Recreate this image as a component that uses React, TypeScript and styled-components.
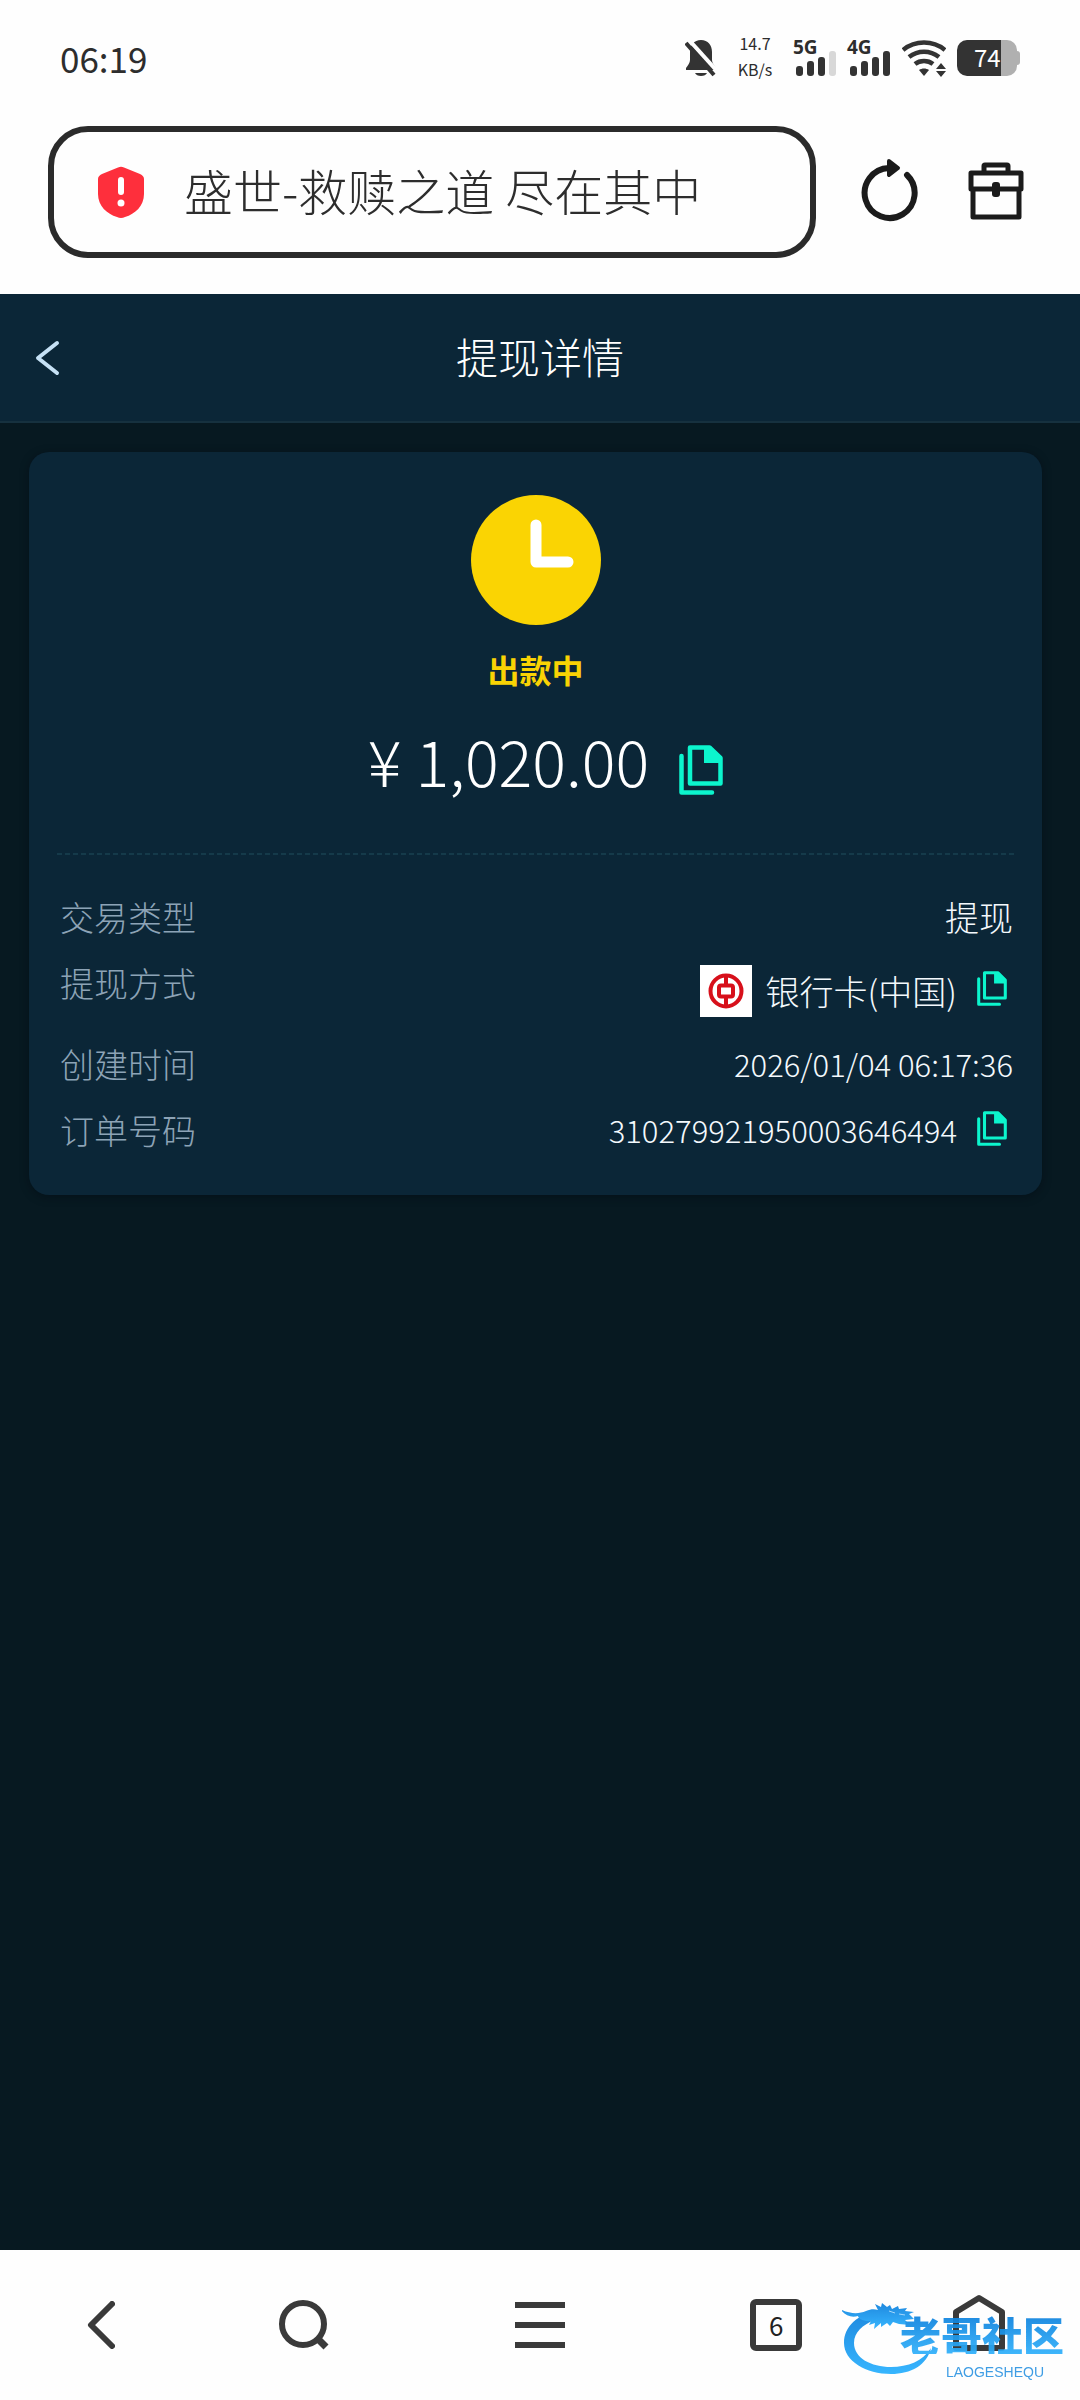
import React from "react";
import styled, { createGlobalStyle } from "styled-components";

const GlobalStyle = createGlobalStyle`
  * { box-sizing: border-box; }
  html, body { margin: 0; padding: 0; }
  body {
    background: #071921;
    font-family: "Noto Sans CJK SC", "Noto Sans", sans-serif;
    font-weight: 300;
  }
  button {
    display: flex;
    align-items: center;
    justify-content: center;
    margin: 0;
    padding: 0;
    border: 0;
    background: none;
    font: inherit;
    color: inherit;
    cursor: pointer;
  }
  svg { display: block; flex: none; }
`;

const Page = styled.div`
  min-height: 100vh;
  display: flex;
  flex-direction: column;
`;

const BrowserTop = styled.header`
  background: #fefefe;
  color: #2d2d2d;
  padding-bottom: 36px;
`;

const StatusBar = styled.div`
  display: flex;
  align-items: center;
  justify-content: space-between;
  height: 116px;
  padding: 0 60px;
`;

const Clock = styled.time`
  font-size: 35px;
  line-height: 40px;
  font-weight: 400;
`;

const StatusIcons = styled.div`
  display: flex;
  align-items: center;
`;

const NetSpeed = styled.div`
  display: flex;
  flex-direction: column;
  align-items: center;
  gap: 6px;
  width: 34px;
  margin: 0 22px 4px 21px;
  font-size: 16px;
  line-height: 20px;
  font-weight: 400;
  white-space: nowrap;
`;

const Signal = styled.div`
  display: flex;
  flex-direction: column;
  width: 42px;
  height: 36px;
  margin-right: 12px;
  position: relative;
`;

const SignalLabel = styled.span`
  position: absolute;
  left: -1px;
  top: -3px;
  font: 700 19px/20px "Open Sans", sans-serif;
`;

const Battery = styled.div`
  display: flex;
  align-items: center;
  margin-left: 11px;
`;

const BatteryBody = styled.div`
  width: 60px;
  height: 36px;
  border-radius: 10px;
  background: linear-gradient(to right, #333 44px, #b0b0b0 44px);
  color: #fff;
  font-size: 24px;
  line-height: 34px;
  font-weight: 400;
  padding-left: 17px;
`;

const BatteryTip = styled.div`
  width: 3px;
  height: 14px;
  border-radius: 0 4px 4px 0;
  background: #b0b0b0;
`;

const AddressRow = styled.div`
  display: flex;
  align-items: center;
  margin-top: 10px;
  padding: 0 56px 0 48px;
`;

const AddressBox = styled.label`
  flex: 1;
  min-width: 0;
  display: flex;
  align-items: center;
  gap: 40px;
  height: 132px;
  padding: 0 44px;
  border: 6px solid #2b2b2b;
  border-radius: 40px;
`;

const AddressInput = styled.input`
  flex: 1;
  min-width: 0;
  padding: 0 0 4px;
  border: 0;
  outline: 0;
  background: none;
  font: inherit;
  font-size: 49px;
  line-height: 60px;
  color: #2d2d2d;
`;

const ToolButton = styled.button`
  margin-left: 44px;
  & + & { margin-left: 50px; }
`;

const AppBar = styled.div`
  display: grid;
  grid-template-columns: 1fr auto 1fr;
  align-items: center;
  height: 129px;
  padding: 0 34px;
  background: #0b2637;
  border-bottom: 2px solid #16313f;
`;

const BackButton = styled.button`
  justify-self: start;
  color: #c6e1f5;
`;

const Title = styled.h1`
  margin: 0;
  padding-bottom: 4px;
  font-size: 42px;
  line-height: 60px;
  font-weight: 300;
  color: #fff;
`;

const Main = styled.main`
  flex: 1;
  padding: 29px 38px 29px 29px;
`;

const Card = styled.section`
  padding: 43px 28px 40px;
  border-radius: 20px;
  background: #0b2637;
  box-shadow: 0 2px 10px rgba(0, 8, 14, 0.4);
`;

const Summary = styled.div`
  display: flex;
  flex-direction: column;
  align-items: center;
`;

const StatusText = styled.p`
  margin: 19px 0 26px;
  font-size: 32px;
  line-height: 50px;
  font-weight: 700;
  color: #f9d304;
`;

const AmountRow = styled.div`
  display: flex;
  align-items: center;
  gap: 30px;
  padding-left: 20px;
`;

const Amount = styled.span`
  font-size: 63px;
  line-height: 80px;
  color: #fff;
`;

const CopyButton = styled.button<{ $small?: boolean }>`
  color: #0cf5cd;
  ${({ $small }) => ($small ? "margin: 0 6px 4px 20px;" : "margin-top: 20px;")}
`;

const Divider = styled.hr`
  height: 2px;
  margin: 53px 0 37px;
  border: 0;
  background: repeating-linear-gradient(to right, #153a4a 0 5px, transparent 5px 8px);
`;

const Details = styled.dl`
  display: flex;
  flex-direction: column;
  gap: 16px;
  margin: 0;
  padding: 0 1px 0 3px;
`;

const DetailRow = styled.div`
  display: flex;
  align-items: flex-start;
  justify-content: space-between;
`;

const Label = styled.dt`
  font-size: 34px;
  line-height: 50px;
  color: #8da3b6;
`;

const Value = styled.dd<{ $tall?: boolean; $numeric?: boolean }>`
  display: flex;
  align-items: center;
  height: ${({ $tall }) => ($tall ? 65 : 50)}px;
  margin: 0;
  font-size: ${({ $numeric }) => ($numeric ? 31 : 34)}px;
  line-height: 50px;
  color: #f4f9fd;
`;

const BankLogo = styled.span`
  display: flex;
  align-items: center;
  justify-content: center;
  width: 52px;
  height: 52px;
  margin-right: 14px;
  background: #fff;
`;

const BottomNav = styled.nav`
  position: relative;
  display: grid;
  grid-template-columns: 3fr 3fr 4fr 3fr 3fr;
  height: 150px;
  background: #fefefe;
  color: #3a3a3a;
`;

const TabCount = styled.span`
  display: flex;
  align-items: center;
  justify-content: center;
  width: 52px;
  height: 52px;
  border: 6px solid #3a3a3a;
  border-radius: 6px;
  font-size: 26px;
  line-height: 40px;
  font-weight: 400;
  color: #222;
`;

const Watermark = styled.div`
  position: absolute;
  right: 16px;
  top: 46px;
  width: 222px;
  height: 84px;
  opacity: 0.92;
  pointer-events: none;
`;

const WatermarkName = styled.span`
  position: absolute;
  right: 0;
  top: 18px;
  font-size: 41px;
  line-height: 40px;
  font-weight: 900;
  white-space: nowrap;
  color: transparent;
  background: linear-gradient(#0b7fdc, #2fb0fb);
  background-clip: text;
  -webkit-background-clip: text;
`;

const WatermarkLatin = styled.span`
  position: absolute;
  right: 20px;
  top: 69px;
  font: 400 14px/14px "Liberation Sans", sans-serif;
  color: #2f95e2;
`;

function BellOff() {
  return (
    <svg width="32" height="38" viewBox="0 0 32 38" aria-hidden="true">
      <path d="M16 1C9 1 5 6 5 13v8c0 3-2 5-4 8v2h30v-2c-2-3-4-5-4-8v-8C27 6 23 1 16 1z" fill="#333" />
      <path d="M10 34h12c-1 2-3 3-6 3s-5-1-6-3z" fill="#333" />
      <path d="M4 1l28 31" stroke="#fefefe" strokeWidth="4" />
      <path d="M1 4l28 32" stroke="#333" strokeWidth="4" />
    </svg>
  );
}

function SignalBars({ label, level }: { label: string; level: number }) {
  const bars = [10, 15, 19, 25];
  return (
    <Signal>
      <SignalLabel>{label}</SignalLabel>
      <svg width="42" height="36" viewBox="0 0 42 36" aria-hidden="true">
        {bars.map((h, i) => (
          <rect key={h} x={2 + i * 11} y={36 - h} width="7" height={h} rx="3" fill={i < level ? "#333" : "#d8d8d8"} />
        ))}
      </svg>
    </Signal>
  );
}

function Wifi() {
  return (
    <svg width="44" height="37" viewBox="0 0 44 37" aria-hidden="true">
      <g fill="none" stroke="#333" strokeWidth="4.5">
        <path d="M1 10C13 0 31 0 43 10" />
        <path d="M7 17c9-7 21-7 30 0" />
        <path d="M13 24c5-4 13-4 18 0" />
      </g>
      <path d="M17 30c3-2 7-2 10 0l-5 6z" fill="#333" />
      <path d="M34 29l5-6 5 6zM34 31h10l-5 6z" fill="#333" />
    </svg>
  );
}

function Shield() {
  return (
    <svg width="46" height="52" viewBox="0 0 46 52" aria-hidden="true">
      <path d="M20 1.500Q23 0 26 1.500L42 8q4 2 4 5v15c0 12-9 20-19 23q-4 2-8 0C9 48 0 40 0 28V13q0-3 4-5z" fill="#fe2f3c" />
      <path d="M23 14v12" stroke="#fff" strokeWidth="6" strokeLinecap="round" />
      <circle cx="23" cy="37" r="3.500" fill="#fff" />
    </svg>
  );
}

function Reload() {
  return (
    <svg width="58" height="68" viewBox="0 0 58 68" aria-hidden="true">
      <path d="M47 17A25 25 0 1 1 29 10" fill="none" stroke="#1b1b1b" strokeWidth="6" strokeLinecap="round" />
      <path d="M29 3l9 7-9 7z" fill="#1b1b1b" stroke="#1b1b1b" strokeWidth="4" strokeLinejoin="round" />
    </svg>
  );
}

function Briefcase() {
  return (
    <svg width="56" height="60" viewBox="0 0 56 60" aria-hidden="true">
      <g fill="none" stroke="#1b1b1b" strokeWidth="5" strokeLinejoin="round">
        <path d="M16 11V4q0-1 1-1h22q1 0 1 1v7" />
        <path d="M3 11h50v16H3z" />
        <path d="M5 27v28h46V27" />
      </g>
      <rect x="24" y="20" width="8" height="15" rx="3" fill="#1b1b1b" />
    </svg>
  );
}

function Chevron({ width, height, stroke }: { width: number; height: number; stroke: number }) {
  return (
    <svg width={width} height={height} viewBox={`0 0 ${width} ${height}`} aria-hidden="true">
      <path
        d={`M${width - 3} 3L4 ${height / 2}L${width - 3} ${height - 3}`}
        fill="none"
        stroke="currentColor"
        strokeWidth={stroke}
        strokeLinecap="round"
        strokeLinejoin="round"
      />
    </svg>
  );
}

function ClockIcon() {
  return (
    <svg width="130" height="130" viewBox="0 0 130 130" aria-hidden="true">
      <circle cx="65" cy="65" r="65" fill="#fad403" />
      <path d="M65 30v37h32" fill="none" stroke="#fff" strokeWidth="11" strokeLinecap="round" strokeLinejoin="round" />
    </svg>
  );
}

function CopyIcon({ width, height }: { width: number; height: number }) {
  return (
    <svg width={width} height={height} viewBox="0 0 44 50" preserveAspectRatio="none" aria-hidden="true">
      <path d="M11 2.500h19.500L41.500 13v25.500H11z" fill="none" stroke="currentColor" strokeWidth="4.500" strokeLinejoin="round" />
      <path d="M25 3h6l11 10v5H25z" fill="currentColor" />
      <path d="M2.500 11v36.500H33" fill="none" stroke="currentColor" strokeWidth="4.500" strokeLinecap="round" strokeLinejoin="round" />
    </svg>
  );
}

function BankMark() {
  return (
    <svg width="36" height="36" viewBox="0 0 36 36" aria-hidden="true">
      <circle cx="18" cy="18" r="15.500" fill="none" stroke="#d7101b" strokeWidth="4" />
      <rect x="11" y="12.500" width="14" height="11" rx="2" fill="none" stroke="#d7101b" strokeWidth="4" />
      <path d="M18 3v9M18 24v9" stroke="#d7101b" strokeWidth="4" />
    </svg>
  );
}

function SearchIcon() {
  return (
    <svg width="52" height="52" viewBox="0 0 52 52" aria-hidden="true">
      <circle cx="25" cy="25" r="21" fill="none" stroke="#3a3a3a" strokeWidth="6" />
      <path d="M39 39l9 9" stroke="#3a3a3a" strokeWidth="7" />
    </svg>
  );
}

function MenuIcon() {
  return (
    <svg width="50" height="46" viewBox="0 0 50 46" aria-hidden="true">
      <path d="M0 3h50M0 23h50M0 43h50" stroke="#3a3a3a" strokeWidth="6" />
    </svg>
  );
}

function HomeIcon() {
  return (
    <svg width="52" height="62" viewBox="0 0 52 62" aria-hidden="true">
      <path d="M3 18L26 4l23 14v36H3z" fill="none" stroke="#3a3a3a" strokeWidth="6" strokeLinejoin="round" />
    </svg>
  );
}

function Dragon() {
  return (
    <svg width="96" height="84" viewBox="0 0 96 84" aria-hidden="true">
      <defs>
        <linearGradient id="dragon" x1="0" y1="0" x2="0" y2="1">
          <stop offset="0" stopColor="#0c7fdc" />
          <stop offset="1" stopColor="#27b0ff" />
        </linearGradient>
      </defs>
      <g fill="url(#dragon)">
        <path d="M36 15C16 18 2 30 2 47c0 18 22 31 47 31 20 0 36-9 40-26-8 13-23 19-40 19-20 0-37-9-37-24 0-11 9-18 20-23z" />
        <path d="M0 14c9 4 17 4 24 1 5-2 8-2 12-1l-3-6 6 3 1-4 5 4 3-2 2 4 6-3 1 3 8-1-2 3 9 1-5 2 5 5-9 1 5 5-11-1-6-2-3 4-3-3-6 4v-4l-7 6 1-6-6 2 2-4c-8 1-13-3-13-5-6 2-13 0-17-6z" />
      </g>
      <path d="M47 15l6 2M57 18l6 1" stroke="#9fd4fa" strokeWidth="1" />
    </svg>
  );
}

export default function App() {
  return (
    <Page>
      <GlobalStyle />
      <BrowserTop>
        <StatusBar>
          <Clock>06:19</Clock>
          <StatusIcons>
            <BellOff />
            <NetSpeed>
              <span>14.7</span>
              <span>KB/s</span>
            </NetSpeed>
            <SignalBars label="5G" level={3} />
            <SignalBars label="4G" level={4} />
            <Wifi />
            <Battery>
              <BatteryBody>74</BatteryBody>
              <BatteryTip />
            </Battery>
          </StatusIcons>
        </StatusBar>
        <AddressRow>
          <AddressBox>
            <Shield />
            <AddressInput type="text" aria-label="地址栏" defaultValue="盛世-救赎之道 尽在其中" />
          </AddressBox>
          <ToolButton aria-label="刷新">
            <Reload />
          </ToolButton>
          <ToolButton aria-label="工具箱">
            <Briefcase />
          </ToolButton>
        </AddressRow>
      </BrowserTop>

      <AppBar>
        <BackButton aria-label="返回">
          <Chevron width={26} height={36} stroke={4} />
        </BackButton>
        <Title>提现详情</Title>
      </AppBar>

      <Main>
        <Card>
          <Summary>
            <ClockIcon />
            <StatusText>出款中</StatusText>
            <AmountRow>
              <Amount>¥ 1,020.00</Amount>
              <CopyButton aria-label="复制金额">
                <CopyIcon width={44} height={50} />
              </CopyButton>
            </AmountRow>
          </Summary>
          <Divider />
          <Details>
            <DetailRow>
              <Label>交易类型</Label>
              <Value>提现</Value>
            </DetailRow>
            <DetailRow>
              <Label>提现方式</Label>
              <Value $tall>
                <BankLogo>
                  <BankMark />
                </BankLogo>
                银行卡(中国)
                <CopyButton $small aria-label="复制提现方式">
                  <CopyIcon width={30} height={35} />
                </CopyButton>
              </Value>
            </DetailRow>
            <DetailRow>
              <Label>创建时间</Label>
              <Value $numeric>2026/01/04 06:17:36</Value>
            </DetailRow>
            <DetailRow>
              <Label>订单号码</Label>
              <Value $numeric>
                310279921950003646494
                <CopyButton $small aria-label="复制订单号码">
                  <CopyIcon width={30} height={35} />
                </CopyButton>
              </Value>
            </DetailRow>
          </Details>
        </Card>
      </Main>

      <BottomNav>
        <button aria-label="后退">
          <Chevron width={28} height={48} stroke={6} />
        </button>
        <button aria-label="搜索">
          <SearchIcon />
        </button>
        <button aria-label="菜单">
          <MenuIcon />
        </button>
        <button aria-label="标签页">
          <TabCount>6</TabCount>
        </button>
        <button aria-label="主页">
          <HomeIcon />
        </button>
        <Watermark>
          <Dragon />
          <WatermarkName>老哥社区</WatermarkName>
          <WatermarkLatin>LAOGESHEQU</WatermarkLatin>
        </Watermark>
      </BottomNav>
    </Page>
  );
}
